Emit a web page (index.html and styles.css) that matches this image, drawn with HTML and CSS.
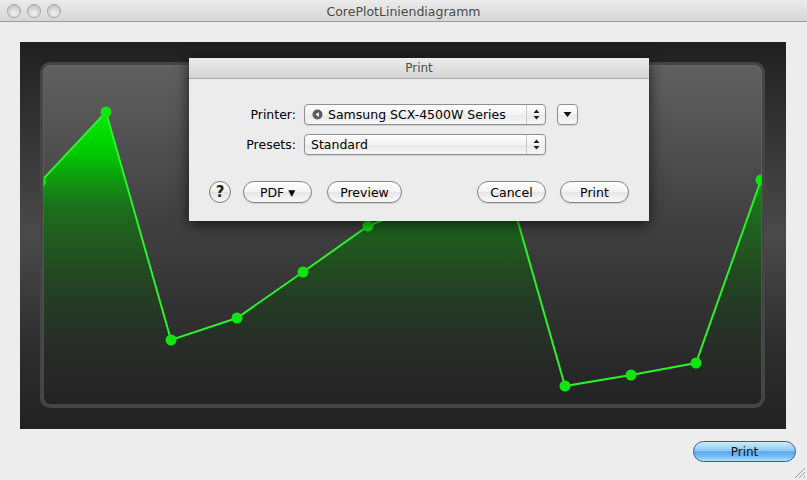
FILE: index.html
```html
<!DOCTYPE html>
<html lang="de">
<head>
  <meta charset="UTF-8">
  <meta name="viewport" content="width=device-width, initial-scale=1.0">
  <title>CorePlotLiniendiagramm</title>
  <link rel="stylesheet" href="styles.css">
</head>
<body>
<div class="window">
  <div class="titlebar">
    <div class="lights">
      <span class="light"></span>
      <span class="light"></span>
      <span class="light"></span>
    </div>
    <div class="window-title">CorePlotLiniendiagramm</div>
    <div></div>
  </div>

  <div class="content">
    <div class="graph">
      <svg width="766" height="387" viewBox="0 0 766 387">
        <defs>
          <linearGradient id="outer" x1="0" y1="0" x2="0" y2="1">
            <stop offset="0" stop-color="#202020"/>
            <stop offset="0.5" stop-color="#4a4a4a"/>
            <stop offset="0.78" stop-color="#2e2e2e"/>
            <stop offset="1" stop-color="#222222"/>
          </linearGradient>
          <linearGradient id="plot" x1="0" y1="0" x2="0" y2="1">
            <stop offset="0" stop-color="#616161"/>
            <stop offset="0.45" stop-color="#414141"/>
            <stop offset="1" stop-color="#222222"/>
          </linearGradient>
          <linearGradient id="area" gradientUnits="userSpaceOnUse" x1="0" y1="70" x2="0" y2="350">
            <stop offset="0" stop-color="#00ee00" stop-opacity="1"/>
            <stop offset="0.14" stop-color="#00cc00" stop-opacity="1"/>
            <stop offset="0.34" stop-color="#1a701a" stop-opacity="0.95"/>
            <stop offset="0.7" stop-color="#1e3c1e" stop-opacity="0.7"/>
            <stop offset="1" stop-color="#202020" stop-opacity="0"/>
          </linearGradient>
          <clipPath id="inner">
            <rect x="23" y="23" width="719" height="340" rx="8"/>
          </clipPath>
        </defs>
        <rect width="766" height="387" fill="url(#outer)"/>
        <rect x="21.5" y="21.5" width="722" height="343" rx="9" fill="url(#plot)" stroke="#454545" stroke-width="3"/>
        <g clip-path="url(#inner)">
          <polygon fill="url(#area)"
            points="20.5,363 20.5,140 86,70 151,298 217,276 283,230 348,184 414,158 480,117 545,344 611,333 676,321 741,138 741,363"/>
          <polyline fill="none" stroke="#2cf02c" stroke-width="2"
            points="20.5,140 86,70 151,298 217,276 283,230 348,184 414,158 480,117 545,344 611,333 676,321 741,138"/>
          <g fill="#0fe60f">
            <circle cx="20.5" cy="140" r="5.5"/>
            <circle cx="86" cy="70" r="5.5"/>
            <circle cx="151" cy="298" r="5.5"/>
            <circle cx="217" cy="276" r="5.5"/>
            <circle cx="283" cy="230" r="5.5"/>
            <circle cx="348" cy="184" r="5.5"/>
            <circle cx="414" cy="158" r="5.5"/>
            <circle cx="480" cy="117" r="5.5"/>
            <circle cx="545" cy="344" r="5.5"/>
            <circle cx="611" cy="333" r="5.5"/>
            <circle cx="676" cy="321" r="5.5"/>
            <circle cx="741" cy="138" r="5.5"/>
          </g>
        </g>
        <rect x="23.5" y="23.5" width="718" height="339" rx="7.5" fill="none" stroke="#6c6c6c" stroke-opacity="0.5"/>
      </svg>
    </div>
  </div>

  <div class="footer">
    <button class="aqua-blue">Print</button>
  </div>

  <svg class="grip" width="14" height="14" viewBox="0 0 14 14">
    <g stroke="#9a9a9a" stroke-width="1">
      <line x1="13" y1="3" x2="3" y2="13"/>
      <line x1="13" y1="7" x2="7" y2="13"/>
      <line x1="13" y1="11" x2="11" y2="13"/>
    </g>
  </svg>

  <!-- print sheet -->
  <div class="sheet">
    <div class="sheet-title">Print</div>
    <div class="sheet-body">
      <div class="fields">
        <label class="field-label">Printer:</label>
        <div class="popup">
          <span class="popup-text">
            <svg class="printer-icon" width="11" height="11" viewBox="0 0 11 11">
              <circle cx="5.5" cy="5.5" r="5" fill="#5a5a5a"/>
              <path d="M6.8 3 L3.6 5.5 L6.8 8 Z" fill="#fff"/>
            </svg>
            Samsung SCX-4500W Series
          </span>
          <span class="popup-arrows">
            <svg width="7" height="11" viewBox="0 0 7 11"><path d="M3.5 0.5 L6.5 4 L0.5 4 Z M3.5 10.5 L6.5 7 L0.5 7 Z" fill="#222"/></svg>
          </span>
        </div>
        <button class="disclosure">
          <svg width="9" height="7" viewBox="0 0 9 7"><path d="M0.5 1 L8.5 1 L4.5 6 Z" fill="#111"/></svg>
        </button>

        <label class="field-label">Presets:</label>
        <div class="popup">
          <span class="popup-text plain">Standard</span>
          <span class="popup-arrows">
            <svg width="7" height="11" viewBox="0 0 7 11"><path d="M3.5 0.5 L6.5 4 L0.5 4 Z M3.5 10.5 L6.5 7 L0.5 7 Z" fill="#222"/></svg>
          </span>
        </div>
      </div>

      <div class="actions">
        <button class="help">?</button>
        <button class="aqua pdf">PDF <span class="caret">&#9660;</span></button>
        <button class="aqua preview">Preview</button>
        <span class="spacer"></span>
        <button class="aqua cancel">Cancel</button>
        <button class="aqua print">Print</button>
      </div>
    </div>
  </div>
</div>
</body>
</html>
```

FILE: styles.css
```css
body {
  margin: 0;
  background-color: #ededed;
  font-family: "DejaVu Sans", "Liberation Sans", sans-serif;
  font-size: 12px;
  color: #000;
}

.window {
  position: relative;
  width: 807px;
  height: 480px;
  overflow: hidden;
  background-color: #ededed;
}

.titlebar {
  height: 21px;
  display: grid;
  grid-template-columns: 1fr auto 1fr;
  align-items: center;
  background: linear-gradient(#ebebeb, #d6d6d6);
  border-bottom: 1px solid #9c9c9c;
}

.lights {
  display: flex;
  gap: 6px;
  padding-left: 7px;
}

.light {
  width: 14px;
  height: 14px;
  border-radius: 50%;
  border: 1px solid #a5a5a5;
  box-sizing: border-box;
  background: radial-gradient(circle at 50% 70%, #f4f4f4 0%, #d4d4d4 55%, #b9b9b9 100%);
}

.window-title {
  color: #4a4a4a;
  font-size: 12.5px;
  padding-top: 1px;
}

.content {
  padding: 20px 21px 0 20px;
}

.graph {
  height: 387px;
}

.graph svg {
  display: block;
}

.footer {
  display: flex;
  justify-content: flex-end;
  padding: 12px 11px 0 0;
}

.aqua-blue {
  width: 103px;
  height: 21px;
  border: 1px solid #3a5c96;
  border-radius: 11px;
  background: linear-gradient(#d2ebfd 0%, #8cc8f6 45%, #5aa9ec 52%, #7cc0f6 80%, #b6e2fd 100%);
  font-family: "DejaVu Sans", "Liberation Sans", sans-serif;
  font-size: 12px;
  color: #111;
  padding: 0;
}

.grip {
  position: absolute;
  right: 1px;
  bottom: 1px;
}

/* print sheet */
.sheet {
  position: absolute;
  left: 189px;
  top: 58px;
  width: 460px;
  height: 163px;
  background-color: #ececec;
  box-shadow: 0 3px 14px rgba(0, 0, 0, 0.7);
}

.sheet-title {
  height: 20px;
  line-height: 21px;
  text-align: center;
  color: #4d4d4d;
  background: linear-gradient(#ececec, #d4d4d4);
  border-bottom: 1px solid #a6a6a6;
}

.sheet-body {
  padding: 25px 20px 0 0;
}

.fields {
  display: grid;
  grid-template-columns: 107px 242px 21px;
  column-gap: 8px;
  row-gap: 9px;
  align-items: center;
}

.field-label {
  text-align: right;
  font-size: 12.5px;
}

.popup {
  height: 19px;
  display: flex;
  align-items: stretch;
  border: 1px solid #8f8f8f;
  border-radius: 4px;
  background: linear-gradient(#ffffff, #f3f3f3 50%, #e9e9e9 51%, #f7f7f7);
  box-shadow: 0 1px 1px rgba(0, 0, 0, 0.12);
}

.popup-text {
  flex: 1;
  display: flex;
  align-items: center;
  gap: 5px;
  padding-left: 7px;
  font-size: 12.5px;
}

.popup-text.plain {
  padding-left: 6px;
}

.popup-arrows {
  width: 18px;
  display: flex;
  align-items: center;
  justify-content: center;
  border-left: 1px solid #c9c9c9;
}

.disclosure {
  width: 21px;
  height: 21px;
  margin-left: 3px;
  padding: 0;
  display: flex;
  align-items: center;
  justify-content: center;
  border: 1px solid #8f8f8f;
  border-radius: 4px;
  background: linear-gradient(#ffffff, #f3f3f3 50%, #e9e9e9 51%, #f7f7f7);
  box-shadow: 0 1px 1px rgba(0, 0, 0, 0.12);
}

.actions {
  display: flex;
  align-items: center;
  margin-top: 26px;
  padding-left: 20px;
}

.help {
  width: 22px;
  height: 22px;
  padding: 0;
  border: 1px solid #7e7e7e;
  border-radius: 50%;
  background: linear-gradient(#ffffff, #eeeeee 50%, #e2e2e2 51%, #f8f8f8);
  font-family: "DejaVu Sans", sans-serif;
  font-weight: bold;
  font-size: 15px;
  line-height: 20px;
  color: #222;
}

.aqua {
  height: 22px;
  padding: 0;
  border: 1px solid #858585;
  border-radius: 11px;
  background: linear-gradient(#ffffff, #f4f4f4 50%, #e6e6e6 51%, #f9f9f9);
  box-shadow: 0 1px 1px rgba(0, 0, 0, 0.12);
  font-family: "DejaVu Sans", "Liberation Sans", sans-serif;
  font-size: 12.5px;
  color: #000;
}

.caret {
  font-size: 9px;
  vertical-align: 1px;
}

.pdf {
  width: 69px;
  margin-left: 12px;
}

.preview {
  width: 75px;
  margin-left: 15px;
}

.spacer {
  flex: 1;
}

.cancel {
  width: 69px;
}

.print {
  width: 69px;
  margin-left: 14px;
}
```
